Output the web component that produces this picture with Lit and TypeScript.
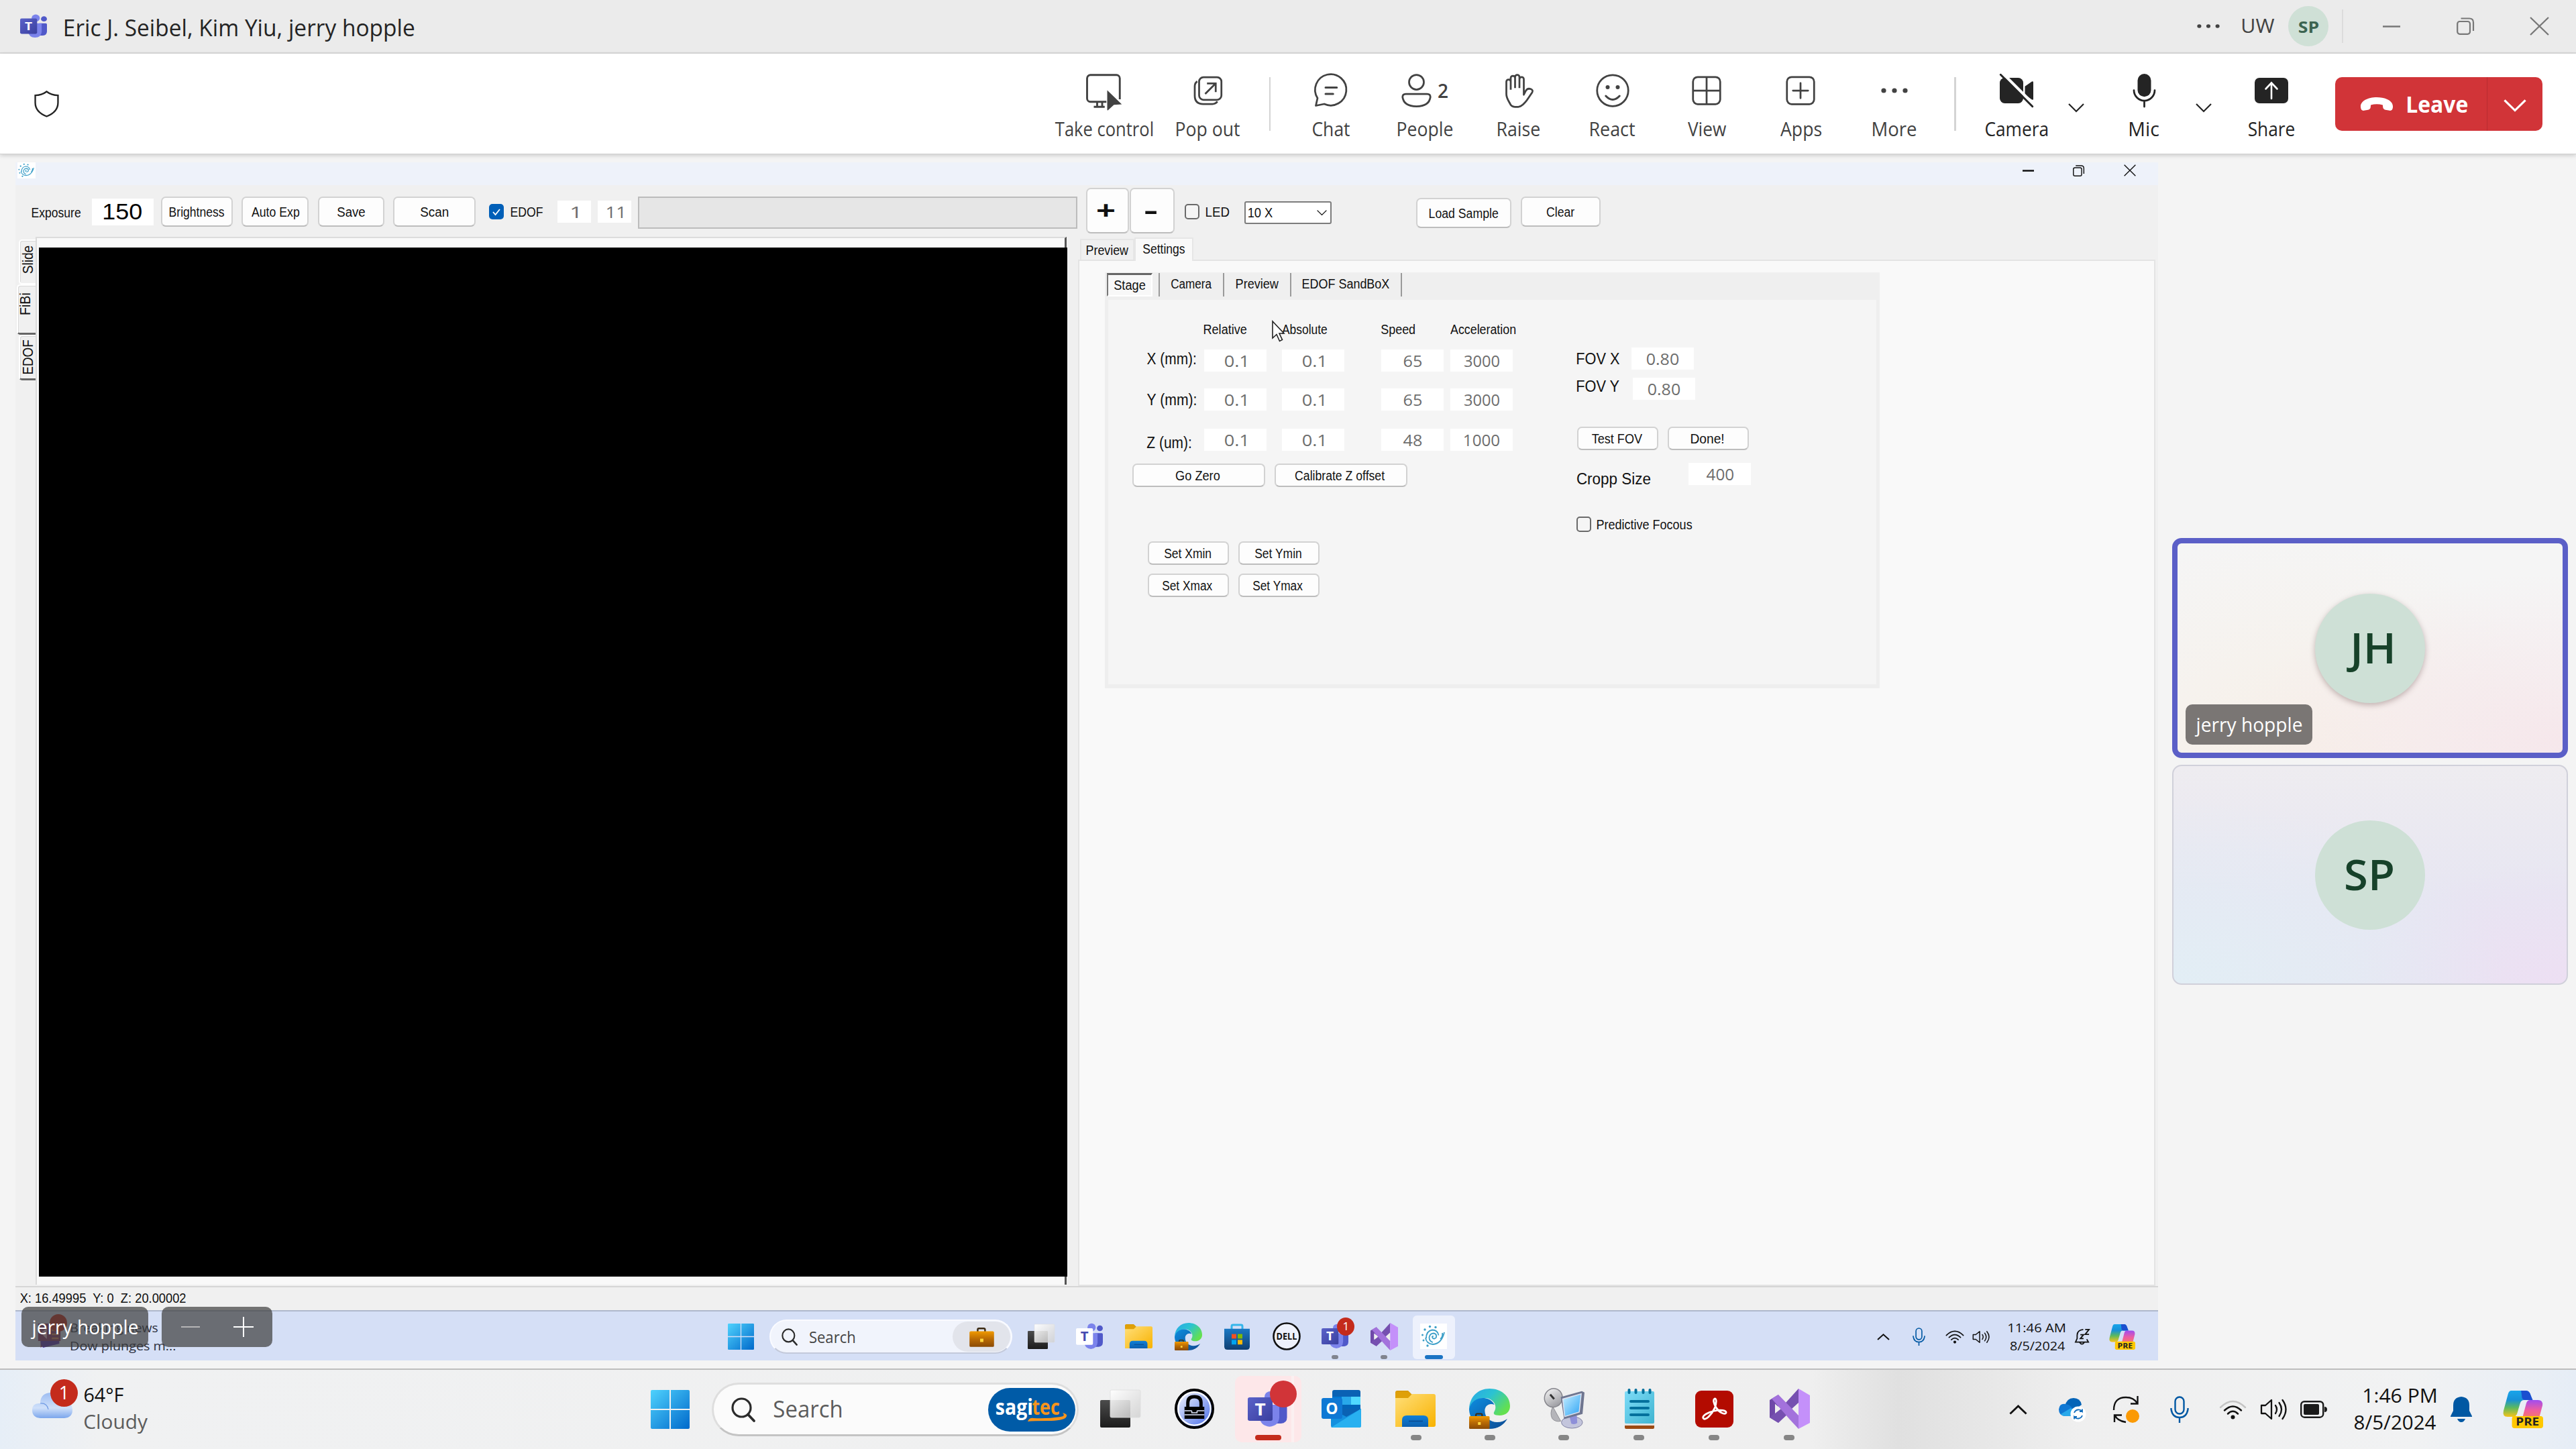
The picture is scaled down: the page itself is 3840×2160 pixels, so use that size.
import { LitElement, html, svg, css } from "lit";
import { customElement, property } from "lit/decorators.js";

/** One line of text whose ink is scaled horizontally to a given width. */
@customElement("fit-text")
class FitText extends LitElement {
  @property({ type: Number }) w = 0;
  static styles = css`
    :host { display: inline-block; white-space: pre; flex: none; text-align: left; }
    .line { display: inline-block; transform-origin: 0 50%; }
  `;
  render() {
    return html`<span class="line"><slot></slot></span>`;
  }
  updated() {
    const line = this.renderRoot.querySelector(".line") as HTMLElement;
    const cs = getComputedStyle(this);
    const ctx = document.createElement("canvas").getContext("2d")!;
    const size = parseFloat(cs.fontSize);
    ctx.font = `${cs.fontWeight} 200px ${cs.fontFamily}`;
    const m = ctx.measureText(this.textContent || "");
    const unit = size / 200;
    const left = m.actualBoundingBoxLeft * unit;
    const k = this.w / (m.actualBoundingBoxRight * unit + left);
    this.style.width = `${this.w}px`;
    line.style.transform = `translateX(${left * k}px) scaleX(${k})`;
  }
}

const t = (text: string, w: number, cls = "") => html`<fit-text class=${cls} w=${w}>${text}</fit-text>`;

const defs = svg`
  <linearGradient id="win" x1="0" y1="0" x2="1" y2="1"><stop offset="0" stop-color="#4fd2fd"/><stop offset="1" stop-color="#0069cb"/></linearGradient>
  <linearGradient id="fold" x1="0" y1="0" x2="1" y2="1"><stop offset="0" stop-color="#ffdf7a"/><stop offset="1" stop-color="#f8b200"/></linearGradient>
  <linearGradient id="foldb" x1="0" y1="0" x2="0" y2="1"><stop offset="0" stop-color="#0f80d8"/><stop offset="1" stop-color="#0c5fae"/></linearGradient>
  <linearGradient id="edg" x1="0" y1="0" x2="1" y2=".6"><stop offset="0" stop-color="#2aa6e8"/><stop offset=".5" stop-color="#2bc3d2"/><stop offset="1" stop-color="#63e04f"/></linearGradient>
  <linearGradient id="edb" x1="0" y1="0" x2="1" y2="1"><stop offset="0" stop-color="#0d8de0"/><stop offset="1" stop-color="#0d4a92"/></linearGradient>
  <linearGradient id="bag" x1="0" y1="0" x2="0" y2="1"><stop offset="0" stop-color="#f09a00"/><stop offset=".5" stop-color="#b96a04"/><stop offset="1" stop-color="#8a4a04"/></linearGradient>
  <linearGradient id="tvd" x1="0" y1="0" x2="0" y2="1"><stop offset="0" stop-color="#4c4c4c"/><stop offset="1" stop-color="#1c1c1c"/></linearGradient>
  <linearGradient id="tvl" x1="0" y1="0" x2="1" y2="1"><stop offset="0" stop-color="#fff" stop-opacity=".95"/><stop offset="1" stop-color="#d0d0d0" stop-opacity=".8"/></linearGradient>
  <linearGradient id="kp" x1="0" y1="0" x2="1" y2="1"><stop offset="0" stop-color="#fff"/><stop offset="1" stop-color="#3f66e8"/></linearGradient>
  <linearGradient id="note" x1="0" y1="0" x2="1" y2="1"><stop offset="0" stop-color="#7fdcf8"/><stop offset="1" stop-color="#3fb4d0"/></linearGradient>
  <linearGradient id="scr" x1="0" y1="0" x2="1" y2="1"><stop offset="0" stop-color="#c9efff"/><stop offset="1" stop-color="#2aa3f5"/></linearGradient>
  <linearGradient id="dish" x1="0" y1="0" x2="1" y2="1"><stop offset="0" stop-color="#fafafa"/><stop offset="1" stop-color="#8c8c92"/></linearGradient>
  <linearGradient id="cld" x1="0" y1="0" x2="0" y2="1"><stop offset="0" stop-color="#9dbdf2"/><stop offset=".6" stop-color="#cfe0fa"/><stop offset="1" stop-color="#7ba6ec"/></linearGradient>
  <linearGradient id="tt" x1="0" y1="0" x2="1" y2="1"><stop offset="0" stop-color="#5a62c9"/><stop offset="1" stop-color="#3a3f9f"/></linearGradient>
  <linearGradient id="c1" x1="0" y1="0" x2="0" y2="1"><stop offset="0" stop-color="#19a5ea"/><stop offset=".35" stop-color="#1791d8"/><stop offset=".65" stop-color="#5cb95e"/><stop offset="1" stop-color="#f7c31a"/></linearGradient>
  <linearGradient id="c2" x1="0" y1="0" x2="0" y2="1"><stop offset="0" stop-color="#a04df0"/><stop offset=".5" stop-color="#ee5da0"/><stop offset="1" stop-color="#f6815a"/></linearGradient>
  <linearGradient id="store" x1="0" y1="0" x2="0" y2="1"><stop offset="0" stop-color="#1a78c4"/><stop offset="1" stop-color="#103f72"/></linearGradient>
`;

const bagShape = svg`<path d="M10 42v-3q0-1.500 1.500-1.500h6q1.500 0 1.500 1.500v3" fill="none" stroke="#3b2a12" stroke-width="2"/><rect x="0" y="41" width="30" height="19" rx="1.500" fill="url(#bag)"/><rect x="13" y="50" width="4" height="4" fill="#ffd43b"/>`;
const people = svg`<circle cx="34" cy="10" r="9" fill="#7b83eb"/><circle cx="52" cy="12" r="6.500" fill="#5059c9"/><path d="M42 23h14q2.500 0 2.500 2.500v18q0 9-9 10h-8z" fill="#5059c9"/><path d="M18 23h29v21q-1 13.500-14.500 14.500Q19 57.500 18 44z" fill="#7b83eb"/>`;

const icons: Record<string, [string, unknown]> = {
  teams: ["0 0 60 60", svg`${people}<rect x="0" y="11" width="37" height="38" rx="3" fill="url(#tt)"/><text x="18.500" y="40" text-anchor="middle" font-size="28" font-weight="700" fill="#fff">T</text>`],
  teamsWhite: ["0 0 60 60", svg`${people}<rect x="0" y="12" width="37" height="37" rx="3" fill="#fff"/><text x="18.500" y="41" text-anchor="middle" font-size="30" font-weight="700" fill="#454bb0">T</text>`],
  shield: ["0 0 36 40", svg`<path d="M18 1.500Q25 7 34.500 7.200V18Q34.500 32 18 38.500Q1.500 32 1.500 18V7.200Q11 7 18 1.500z" fill="none" stroke="#242424" stroke-width="2.300"/>`],
  control: ["0 0 22 22", svg`<g fill="none" stroke="#424242" stroke-width="1.150"><path d="M12.500 17.500H3a2 2 0 0 1-2-2V3.500a2 2 0 0 1 2-2h15.500a2 2 0 0 1 2 2V16M5 20.500h6.500M7 17.600v2.800M10 17.600v2.800"/></g><path d="M13 10.600L21.700 19l-4.700.300L13.500 22.500q-.500.300-.500-.400z" fill="#424242"/>`],
  pop: ["0 0 20 20", svg`<g fill="none" stroke="#424242" stroke-width="1.100"><rect x="4.600" y="2" width="13.300" height="13.500" rx="2.600"/><path d="M3.500 4.500Q2 5.500 2 7.500v5.500q0 5 5 5h5.500q2 0 3-1.500M8.200 12l6-6M9.300 5.700h5.200v5.200"/></g>`],
  chat: ["0 0 20 20", svg`<path d="M1 19l1-4.500A9.300 9.300 0 1 1 6 18z" fill="none" stroke="#424242" stroke-width="1.100" stroke-linejoin="round"/><path d="M6.800 8.200h6.700M6.800 12h4.500" stroke="#424242" stroke-width="1.200" stroke-linecap="round"/>`],
  people: ["0 0 18 20", svg`<g fill="none" stroke="#424242" stroke-width="1.100"><circle cx="9" cy="5" r="4.400"/><path d="M2.600 12h12.800q1.900 0 1.900 1.900Q16.500 19.400 9 19.400T.7 13.900Q.7 12 2.600 12z"/></g>`],
  raise: ["0 0 20 20", svg`<path d="M2.600 12V4.700a1.300 1.300 0 0 1 2.600 0V9.500M5.200 9V2.500a1.300 1.300 0 0 1 2.600 0V8.500M7.800 8.500V1.900a1.300 1.300 0 0 1 2.600 0V8.500M10.400 8.500V3.200a1.300 1.300 0 0 1 2.600 0V12.500l1-2c.700-1.500 1.800-1.900 3.200-1.400 1 .400 1.300 1.200.800 2l-3.200 4.700c-.700 1-1.500 1.700-2.400 2.600-.800.700-1.500 1.300-2.700 1.300H7.700c-1.500 0-2.500-.700-3-2.100C3.800 15.900 2.600 14.500 2.600 12" fill="none" stroke="#424242" stroke-width="1.100" stroke-linejoin="round"/>`],
  react: ["0 0 20 20", svg`<circle cx="10" cy="10" r="9.300" fill="none" stroke="#424242" stroke-width="1.100"/><circle cx="7" cy="8" r="1.200" fill="#424242"/><circle cx="13" cy="8" r="1.200" fill="#424242"/><path d="M5.900 13.200q4.100 4.400 8.200 0" fill="none" stroke="#424242" stroke-width="1.200" stroke-linecap="round"/>`],
  view: ["0 0 20 20", svg`<g fill="none" stroke="#424242" stroke-width="1.100"><rect x="1.900" y="1.900" width="16.200" height="16.200" rx="2.800"/><path d="M10 2v16M2 10h16"/></g>`],
  apps: ["0 0 20 20", svg`<g fill="none" stroke="#424242" stroke-width="1.100"><rect x="1.900" y="1.900" width="16.200" height="16.200" rx="2.800"/><path d="M10 5.500v9M5.500 10h9" stroke-linecap="round"/></g>`],
  dots: ["0 0 40 8", svg`<g fill="#424242"><circle cx="4" cy="4" r="3.600"/><circle cx="20" cy="4" r="3.600"/><circle cx="36" cy="4" r="3.600"/></g>`],
  camera: ["0 0 20 20", svg`<rect x="0" y="2.400" width="14" height="15.200" rx="3" fill="#242424"/><path d="M15 7.500l4.200-2.900q.800-.400.800.500v9.800q0 .900-.800.500L15 12.500z" fill="#242424"/><path d="M1.500-.5L21 19" stroke="#fff" stroke-width="1.800"/><path d="M.5.500l19 19" stroke="#242424" stroke-width="1.200" stroke-linecap="round"/>`],
  mic: ["0 0 14 20", svg`<rect x="3" y="0" width="8" height="13.700" rx="4" fill="#242424"/><path d="M.8 9.800a6.200 6.200 0 0 0 12.400 0M7 16v3.600" fill="none" stroke="#242424" stroke-width="1.100" stroke-linecap="round"/>`],
  share: ["0 0 50 38" , svg`<rect width="50" height="38" rx="7" fill="#242424"/><path d="M25 31V8M16.500 16.500L25 7.500l8.500 9" fill="none" stroke="#fff" stroke-width="2.600" stroke-linecap="round"/>`],
  chev: ["0 0 24 13", svg`<path d="M1 1l11 11L23 1" fill="none" stroke="currentColor" stroke-width="2.200"/>`],
  up: ["0 0 28 15", svg`<path d="M1.500 13.500L14 2l12.500 11.500" fill="none" stroke="#111" stroke-width="3"/>`],
  phone: ["0 0 48 20", svg`<path d="M24 0C38 0 49 6 48 15q-.600 5.500-5 4.800l-6-1q-3.500-.800-3.800-4l-.300-3.300q-8.900-2.600-17.800 0l-.300 3.300q-.300 3.200-3.800 4l-6 1Q.600 20.500 0 15C-1 6 10 0 24 0z" fill="#fff"/>`],
  min: ["0 0 26 3", svg`<path d="M0 1.500h26" stroke="currentColor" stroke-width="2.500"/>`],
  restore: ["0 0 26 26", svg`<g fill="none" stroke="currentColor" stroke-width="2.200"><rect x="1.200" y="6" width="18.800" height="18.800" rx="3.500"/><path d="M6.500 1.500H19q6 0 6 6V20"/></g>`],
  close: ["0 0 28 28", svg`<path d="M1 1l26 26M27 1L1 27" stroke="currentColor" stroke-width="2.200"/>`],
  snail: ["0 0 40 38", svg`<rect width="40" height="38" fill="#fff"/><g fill="none" stroke="#3d9fc8" stroke-width="1.800"><path d="M20 19q-3-1-1.500 2.500 3 2.500 5.500-1 1-5-3.500-6-6 0-7 6 0 6 5.500 7.500M8 21q1 9 11 10 13-1 17-18M33 14q1 6-3 9"/><path d="M9 22q0-11 9-12.500 8 0 9.500 8"/></g><g fill="#3d9fc8"><circle cx="3.500" cy="17" r="1.500"/><circle cx="7" cy="9" r="1.700"/><circle cx="14.500" cy="4.500" r="1.700"/><circle cx="23" cy="5.500" r="1.700"/><circle cx="5" cy="25" r="1.500"/><circle cx="11" cy="33" r="1.700"/></g>`],
  start: ["0 0 58 58", svg`<path d="M2 0h26v28H0V2q0-2 2-2zM30 0h26q2 0 2 2v26H30zM0 30h28v28H2q-2 0-2-2zM30 30h28v26q0 2-2 2H30z" fill="url(#win)"/>`],
  search: ["0 0 36 37", svg`<circle cx="15.500" cy="15.500" r="13.500" fill="none" stroke="#2b2b2b" stroke-width="3.200"/><path d="M25 25.500l9 9.500" stroke="#2b2b2b" stroke-width="3.800" stroke-linecap="round"/>`],
  task: ["0 0 60 56", svg`<rect x="0" y="15" width="45" height="41" rx="2" fill="url(#tvd)"/><rect x="15" y="0" width="45" height="41" rx="2" fill="url(#tvl)" stroke="#ddd" stroke-width=".8"/>`],
  keepass: ["0 0 60 60", svg`<circle cx="30" cy="30" r="28" fill="url(#kp)" stroke="#000" stroke-width="4"/><circle cx="30" cy="30" r="24.500" fill="none" stroke="#fff" stroke-width="2"/><path d="M20 27v-6q0-9 10-9t10 9v6" fill="none" stroke="#000" stroke-width="5"/><path d="M15 27h30v18H15z"/><path d="M15 33h11M34 33h11M15 39h30M26 33v3h8v-3" stroke="#dfe6fb" stroke-width="1.500" fill="none"/>`],
  outlook: ["0 0 60 56", svg`<rect x="16" y="0" width="42" height="40" rx="3" fill="#0a62b4"/><rect x="30" y="10" width="14" height="12" fill="#28a8ea"/><rect x="44" y="10" width="14" height="12" fill="#50d9ff"/><rect x="16" y="10" width="14" height="12" fill="#0078d4"/><path d="M14 28l23 12 22-12v25q0 3-3 3H17q-3 0-3-3z" fill="#1490df"/><path d="M14 56l45-28v25q0 3-3 3z" fill="#28b0f0"/><path d="M32 28h26v-6H32z" fill="#0364b8"/><rect x="0" y="12" width="31" height="31" rx="3" fill="#0f78d4"/><text x="15.500" y="36" text-anchor="middle" font-size="23" font-weight="700" fill="#fff">O</text>`],
  folder: ["0 0 60 54", svg`<path d="M0 3q0-3 3-3h16l6 6H0z" fill="#d99a06"/><path d="M0 9h20l5-4h32q3 0 3 3v43q0 3-3 3H0z" fill="url(#fold)"/><path d="M0 2h20l4 4-5 5H0z" fill="#dfa008"/><path d="M10 54V44q0-7 7-7h25q7 0 7 7v10z" fill="url(#foldb)"/><path d="M20 45.500h21" stroke="#0a4f96" stroke-width="1.800"/>`],
  edge: ["0 0 60 60", svg`<path d="M30 0c17 0 30 11 30 26 0 9-7 14-15 14-9 0-10-3-8-6C42 26 36 15 24 14 12 13 4 20 0 30 1 12 13 0 30 0z" fill="url(#edg)"/><path d="M0 30C3 18 13 13 22 14c8 1 13 5 15 10-8-3-14 2-14 9 0 10 8 17 18 17 6 0 11-2 15-5-5 9-14 15-26 15C13 60 0 46 0 30z" fill="url(#edb)"/>${bagShape}`],
  rdp: ["0 0 62 62", svg`<path d="M14 28l12 22q-8 2-13-4-4-8 1-18z" fill="#b5b5ba" stroke="#8c8c92"/><ellipse cx="15" cy="14.500" rx="13.500" ry="14.500" transform="rotate(15 16 14)" fill="url(#dish)" stroke="#85858c" stroke-width="1.500"/><path d="M10 9l6 7" stroke="#333" stroke-width="3"/><ellipse cx="43" cy="52" rx="16" ry="9" fill="#c3c5dc" stroke="#7e80a0"/><path d="M38 38l12-3 1 18q-4 3-9 1z" fill="#8e8fd8"/><path d="M26 13l32-9 4 2-3 33-28 8z" fill="#6f7690"/><path d="M29 16l28-8-3 28-22 7z" fill="url(#scr)" stroke="#dfe3f0" stroke-width="1.500"/>`],
  notepad: ["0 0 44 60", svg`<path d="M0 54h44v4q0 2-2 2H2q-2 0-2-2z" fill="#9c4a12"/><path d="M0 50h44v5H0z" fill="#e8e4e0"/><rect y="4" width="44" height="48" rx="2" fill="url(#note)"/><g stroke="#04709c" stroke-width="4" stroke-linecap="round"><path d="M6.500 2v4M16.500 2v4M27.500 2v4M37.500 2v4"/><path d="M9 19h26M9 29h26M9 39h26"/></g>`],
  acrobat: ["0 0 57 55", svg`<rect width="57" height="55" rx="9" fill="#b30b00"/><path d="M12 41c-2-4 8-9 17-11 8-1.500 18-1 17 3-1.500 4-11-1-15-8-3-5-5-12-2-13s3 7 0 14C25 35 15 46 12 41z" fill="none" stroke="#fff" stroke-width="2.800"/>`],
  vs: ["0 0 60 60", svg`<path d="M0 17l13-8v42L0 43zM8 23v14l7-7z" fill="#6f48a8" fill-rule="evenodd"/><path d="M43 0v23L13 51 0 43 24 21z" fill="#7650b0"/><path d="M8 23v14l9-7z" fill="#efefef"/><path d="M43 21v19L33 30z" fill="#efefef"/><path d="M3 15l10-6 30 31v20L30 46z" fill="#a372dc"/><path d="M43 0l17 10v41L43 60z" fill="#c490fa"/>`],
  bagIcon: ["-1 34 32 27", bagShape],
  store: ["0 0 40 40", svg`<path d="M12 9V4q0-2 2-2h12q2 0 2 2v5" fill="none" stroke="#35b5ea" stroke-width="3"/><path d="M1 8h38v27q0 5-5 5H6q-5 0-5-5z" fill="url(#store)"/><path d="M12 16h7v7h-7z" fill="#f25022"/><path d="M21 16h7v7h-7z" fill="#7fba00"/><path d="M12 25h7v7h-7z" fill="#00a4ef"/><path d="M21 25h7v7h-7z" fill="#ffb900"/>`],
  dell: ["0 0 42 42", svg`<circle cx="21" cy="21" r="19.500" fill="#eef1fb" stroke="#111" stroke-width="2.600"/><text x="21" y="26" text-anchor="middle" font-size="13.500" font-weight="700" textLength="31" lengthAdjust="spacingAndGlyphs" fill="#111">DELL</text>`],
  onedrive: ["0 0 39 35", svg`<path d="M9 12Q12 0 22 0t12 10L20 20z" fill="#0364b8"/><path d="M0 17Q1 7 11 9q9 2 12 12l-9 6H9Q0 26 0 17z" fill="#0f78d4"/><path d="M3 24l15-9 12 8-6 4H8q-3 0-5-3z" fill="#28a8ea"/><circle cx="29" cy="24" r="11.500" fill="#fff"/><path d="M23 22a7 7 0 0 1 12-2v-3.500M35 20h-4M35 26a7 7 0 0 1-12 2v3.500M23 28h4" fill="none" stroke="#0f6cbd" stroke-width="1.800"/>`],
  sync: ["0 0 40 40", svg`<path d="M2 21Q2 2 20 2q12 0 17 9M37.500 0v11.500H27M3 39V28.500h11M3.500 28.500Q7 37 20 39" fill="none" stroke="#111" stroke-width="2.400"/><circle cx="30" cy="30" r="10" fill="#fb9a05"/>`],
  micOut: ["0 0 28 40", svg`<g fill="none" stroke="currentColor" stroke-width="2.400"><rect x="7.500" y="1.500" width="13" height="25" rx="6.500"/><path d="M1.500 18v2q2 12 12.500 12T26.500 20v-2M14 32v8"/></g>`],
  wifi: ["0 0 41 29", svg`<g fill="none" stroke-width="2.500" stroke-linecap="round"><path d="M2 11Q20.500-7 39 11" stroke="var(--weak,#c4c4c4)"/><path d="M8 15.500q12.500-12 25 0M13 20.500q7.500-7.500 15 0" stroke="#111"/></g><circle cx="20.500" cy="25.500" r="3" fill="#111"/>`],
  speaker: ["0 0 40 34", svg`<g fill="none" stroke="#111" stroke-width="2.300" stroke-linecap="round" stroke-linejoin="round"><path d="M2 11h6l9-8v28l-9-8H2z"/><path d="M23 11q4 6 0 12M28.500 7q7 10 0 20M33.500 3q10 14 0 28"/></g>`],
  battery: ["0 0 40 26", svg`<rect x="1.200" y="1.200" width="33" height="23.500" rx="5" fill="none" stroke="#1a1a1a" stroke-width="2.400"/><rect x="5" y="5" width="23" height="16" rx="2" fill="#1a1a1a"/><path d="M36 9q4 0 4 4t-4 4z" fill="#1a1a1a"/>`],
  bell: ["0 0 32 38", svg`<path d="M16 0q12 1 12 13v8l4 8v1H0v-1l4-8v-8Q4 1 16 0zM10 33h12q-2 5-6 5t-6-5z" fill="#0058a3"/>`],
  bellZ: ["0 0 24 26", svg`<path d="M13 2Q3.500 3 3.500 11v5L1 21.500h20L18.500 17M7.500 22q3.500 5 7 0" fill="none" stroke="#111" stroke-width="1.900"/><path d="M8.500 10h5l-5 6h5M16 2h6l-6 7.500h6" fill="none" stroke="#111" stroke-width="1.900"/>`],
  copilot: ["0 0 62 56", svg`<path d="M13 0h22q6 0 8 8l2 6H33q-5 0-6.500 5L22 34q-1.500 5-7 5H7q-8 0-6-9L8 5q1.500-5 5-5z" fill="url(#c1)"/><path d="M28 0h8q5 0 7 7l3 7H34q-5 0-5-7z" fill="#1a4fd0"/><path d="M42 14h12q8 0 7 8l-6 22H24q5-1 6.500-5L36 19q1.500-5 6-5z" fill="url(#c2)"/><rect x="14" y="38" width="48" height="18" rx="4" fill="#ffc800"/><text x="38" y="52.500" text-anchor="middle" font-size="16" font-weight="700" textLength="36" lengthAdjust="spacingAndGlyphs" fill="#222">PRE</text>`],
  cloud: ["0 0 60 38", svg`<path d="M12 16Q12 0 29 0t19 14q12 1 12 12t-12 12H12Q0 37 0 26t12-10z" fill="url(#cld)"/><path d="M12 16q10-1 12 9" fill="none" stroke="#6f9ae4" stroke-width="1.200"/>`],
  swoosh: ["0 0 58 14", svg`<path d="M0 13Q2 7 9 8q20 1 40-2Q57 5 52 0q9 2 5 7Q52 12 30 12T0 13z" fill="#f7941d"/>`],
  check: ["0 0 22 23", svg`<path d="M6 12l3.500 4 6.500-8" fill="none" stroke="#fff" stroke-width="1.800"/>`],
  cursor: ["0 0 19 32", svg`<path d="M1 1v25l6-5.500 4.500 10 4-2-4.500-9.500H18z" fill="#fff" stroke="#222" stroke-width="1.600"/>`],
  news: ["0 0 40 42", svg`<path d="M2 6h36v26H20L6 42V32H2z" fill="#8d3b68"/><path d="M6 32h30v4l-26 6q-4-4-4-10z" fill="#5a35b5"/><path d="M6 20l10-7v16z" fill="#e6b9cc"/><path d="M24 16h11M24 22h11M24 28h11" stroke="#d98b5c" stroke-width="2.500"/>`],
};

const ic = (name: string, w: number, h: number) => {
  const [box, body] = icons[name];
  return html`<svg class="ic" width=${w} height=${h} viewBox=${box} preserveAspectRatio="none">${body}</svg>`;
};

@customElement("app-root")
class AppRoot extends LitElement {
  static styles = css`
    :host { display: block; }
    * { box-sizing: border-box; }
    .ic { display: block; flex: none; overflow: visible; }
    .defs { position: absolute; width: 0; height: 0; }
    .root { position: relative; width: 3840px; height: 2160px; overflow: hidden; display: flex; flex-direction: column; background: #f4f4f4; font-family: "Open Sans", "Noto Sans", sans-serif; color: #242424; }
    .tracks { display: grid; align-items: center; }
    .tracks > :nth-child(1) { grid-column: 2; } .tracks > :nth-child(2) { grid-column: 4; }
    .tracks > :nth-child(3) { grid-column: 6; } .tracks > :nth-child(4) { grid-column: 8; }
    .tracks > :nth-child(5) { grid-column: 10; } .tracks > :nth-child(6) { grid-column: 12; }
    .tracks > :nth-child(7) { grid-column: 14; } .tracks > :nth-child(8) { grid-column: 16; }
    .tracks > :nth-child(9) { grid-column: 18; } .tracks > :nth-child(10) { grid-column: 20; }
    .tracks > :nth-child(11) { grid-column: 22; } .tracks > :nth-child(12) { grid-column: 24; }
    .tracks > :nth-child(13) { grid-column: 26; } .tracks > :nth-child(14) { grid-column: 28; }
    .tracks > :nth-child(15) { grid-column: 30; } .tracks > :nth-child(16) { grid-column: 32; }
    .tracks > :nth-child(17) { grid-column: 34; } .tracks > :nth-child(18) { grid-column: 36; }
    .tracks > * { grid-row: 1; }

    .titlebar { height: 80px; background: #ebebeb; border-bottom: 2px solid #d8d8d8; color: #777; grid-template-columns: 30px 41px 26px 520px 2658px 34px 34px 47px 21px 60px 20px 2px 59px 26px 84px 26px 83px 29px; }
    .caption { font-size: 34px; line-height: 46px; color: #242424; padding-top: 3px; }
    .uw { font-size: 29px; color: #424242; margin-top: -3px; }
    .me { width: 60px; height: 60px; border-radius: 50%; background: #cfe0d6; color: #3c6450; font-weight: 700; font-size: 24px; display: grid; place-items: center; }
    .tdiv { width: 2px; height: 50px; background: #dcdcdc; }

    .toolbar { position: relative; height: 150px; background: #fff; border-bottom: 1px solid #d0d0d0; box-shadow: 0 2px 6px rgba(0,0,0,.16); display: flex; align-items: stretch; color: #424242; flex: none; }
    .shield { width: 1565px; padding: 55px 0 0 51px; }
    .tb { width: 140px; flex: none; display: flex; flex-direction: column; align-items: center; font-size: 28.500px; line-height: 34px; }
    .tb .pic { height: 50px; margin-top: 30px; display: flex; align-items: center; justify-content: center; }
    .tb fit-text { margin-top: 15px; }
    .tb.w160 { width: 160px; } .tb.w120 { width: 120px; color: #242424; }
    .ml5 { margin-left: 6px; } .ml12 { margin-left: 12px; } .ml20 { margin-left: 20px; } .ml30 { margin-left: 30px; }
    .vdiv { width: 2px; height: 80px; margin: 35px 0 0 21px; background: #d4d4d4; flex: none; }
    .vdiv.b { width: 3px; margin-left: 19px; }
    .tb b { font-size: 28px; font-weight: 600; margin-left: 9px; }
    .chev { width: 58px; height: 150px; display: flex; justify-content: center; padding-top: 74px; color: #242424; flex: none; }
    .leave { margin: 35px 0 0 35px; width: 309px; height: 80px; border-radius: 10px; background: #d13438; display: flex; color: #fff; font-weight: 700; font-size: 34px; }
    .leave .go { width: 227px; padding-left: 38px; display: flex; align-items: center; gap: 22px; border-right: 1px solid #b92b30; }
    .leave .more { flex: 1; display: grid; place-items: center; padding-top: 4px; }

    .main { height: 1810px; display: flex; flex: none; }
    .share { position: relative; margin: 12px 0 0 23px; width: 3194px; height: 1786px; display: flex; flex-direction: column; background: #f0f0f0; color: #111; font-family: "Liberation Sans", Arial, sans-serif; font-size: 20px; line-height: 24px; flex: none; }
    .s-title { height: 34px; background: #eef2fa; grid-template-columns: 3px 27px 2962px 17px 58px 17px 59px 18px; padding-bottom: 10px; flex: none; }
    .s-tools { height: 76px; flex: none; padding-top: 3px; grid-template-columns: 25px 72px 17px 92px 11px 107px 13px 100px 14px 99px 13px 123px 20px 22px 11px 47px 22px 50px 10px 50px 10px 655px 13px 64px 1px 67px 15px 22px 10px 34px 23px 130px 126px 142px 14px 119px; }
    .btn { display: flex; align-items: center; justify-content: center; background: #fdfdfd; border: 2px solid #d2d2d2; border-bottom-color: #bdbdbd; border-radius: 7px; height: 45px; }
    .btn.tall { height: 68px; margin-top: -3px; font-weight: 700; font-size: 36px; padding: 0 5px 0 0; }
    .btn.low { margin-top: 4px; }
    .field { display: flex; align-items: center; justify-content: center; height: 33px; background: #fff; color: #6d6d6d; font-family: "Open Sans", sans-serif; font-size: 24px; }
    .field.dark { height: 40px; color: #000; font-family: "Liberation Sans", sans-serif; font-size: 33px; }
    .lbl { padding-top: 2px; }
    .box { width: 22px; height: 23px; border: 2px solid #6a6a6a; border-radius: 5px; background: #f5f5f5; }
    .box.on { background: #005fb8; border: 0; }
    .bar { height: 48px; background: #e6e6e6; border: 2px solid #bcbcbc; margin-top: 2px; }
    .select { height: 34px; background: #fff; border: 2px solid #7c7c7c; border-radius: 3px; display: flex; align-items: center; justify-content: space-between; padding: 0 5px 0 4px; color: #111; margin-top: 2px; }
    .s-body { height: 1565px; display: flex; flex: none; }
    .vtabs { width: 30px; padding-top: 5px; flex: none; display: flex; flex-direction: column; align-items: flex-end; }
    .vtab { width: 25px; border: 2px solid #fff; border-right: 0; border-radius: 5px 0 0 5px; box-shadow: inset 1px 1px 0 #d9d9d9; display: flex; align-items: center; justify-content: center; font-size: 22px; line-height: 24px; }
    .vtab.a { height: 67px; } .vtab.b { width: 28px; height: 75px; border-bottom: 3px solid #666; } .vtab.c { height: 68px; border-bottom: 3px solid #666; }
    .rot { transform: rotate(-90deg); flex: none; display: flex; }
    .vtab.a .rot { margin-bottom: 8px; } .vtab.b .rot { margin: 0 6px 16px 0; } .vtab.c .rot { margin-bottom: 2px; }
    .picbox { width: 1537px; margin-top: 1px; border-left: 2px solid #dadada; border-top: 2px solid #dcdcdc; border-right: 3px solid #555; background: #f9f9f9; padding: 14px 0 12px 3px; height: 1562px; flex: none; }
    .black { height: 1534px; background: #000; margin-right: -4px; }
    .right { margin-left: 17px; width: 1606px; display: flex; flex-direction: column; }
    .tabs { height: 35px; display: flex; align-items: flex-end; padding-left: 3px; flex: none; }
    .tab { height: 31px; width: 81px; border: 2px solid #e6e6e6; border-bottom: 0; display: flex; justify-content: center; align-items: center; }
    .tab.on { height: 35px; width: 88px; background: #f9f9f9; margin-bottom: -2px; padding-bottom: 3px; position: relative; }
    .page { flex: 1; background: #f9f9f9; border: 2px solid #e4e4e4; padding: 17px 0 0 38px; }
    .panel { width: 1155px; height: 620px; background: #f5f5f5; border: solid #eeeeee; border-width: 0 5px 6px 5px; display: flex; flex-direction: column; }
    .strip { height: 41px; margin: 0 -5px; background: #efefef; display: flex; padding-left: 3px; flex: none; }
    .strip div { height: 35px; display: flex; align-items: center; justify-content: center; border-right: 2px solid #9a9a9a; margin-top: 1px; padding-bottom: 3px; }
    .strip .st { width: 68px; border: 2px solid #fff; border-top: 3px solid #666; border-left: 2px solid #777; background: #f8f8f8; padding: 0; }
    .s1 { width: 11px; } .s2 { width: 96px; } .s3 { width: 100px; } .s4 { width: 165px; }
    .pbody { position: relative; flex: 1; display: flex; }
    .ptr { position: absolute; left: 244px; top: 31px; }
    .colA { width: 688px; flex: none; }
    .grid5 { grid-template-columns: 58px 73px 12px 93px 23px 93px 55px 93px 10px 93px; height: 33px; }
    .grid5.head { height: 74px; padding-top: 14px; }
    .g2 { margin-top: 25px; } .g3 { margin-top: 27px; }
    .big { font-size: 23px; }
    .upn { margin-top: -5px; } .dn { margin-top: 9px; } .dn2 { margin-top: 15px; } .up2 { margin-top: -7px; }
    .brow { display: flex; height: 35px; }
    .brow .btn { height: 35px; padding-right: 3px; }
    .r1 { margin: 19px 0 0 36px; gap: 14px; } .r1 .btn { width: 198px; }
    .r2 { margin: 81px 0 0 59px; gap: 14px; } .r3 { margin: 13px 0 0 59px; gap: 14px; }
    .r2 .btn, .r3 .btn, .r4 .btn { width: 121px; }
    .colB { padding: 71px 0 0 11px; }
    .fr { display: flex; align-items: center; height: 33px; }
    .fr .field { width: 93px; }
    .f1 { gap: 18px; } .f2 { margin-top: 12px; gap: 20px; } .r4 { margin: 40px 0 0 0; gap: 14px; }
    .f3 { margin-top: 19px; gap: 57px; } .f4 { margin-top: 42px; gap: 9px; margin-left: -1px; }
    .status { height: 36px; border-top: 2px solid #d6d6d6; padding: 4px 0 0 7px; font-size: 21px; flex: none; }
    .s-task { height: 75px; background: #d5dff6; border-top: 2px solid #aeb8cc; flex: none; font-family: "Open Sans", sans-serif; grid-template-columns: 32px 210px 820px 39px 23px 362px 6px 659px 624px 19px 34px 19px 30px 28px 12px 26px 28px 84px 15px 23px 28px 39px; --weak: #111; padding-top: 2px; }
    .newsrow { display: flex; gap: 14px; position: relative; font-size: 18px; }
    .newsrow .col { display: flex; flex-direction: column; gap: 2px; line-height: 25px; color: #2d3140; }
    .nb { position: absolute; left: 19px; top: -8px; width: 26px; height: 26px; border-radius: 50%; background: #c42b1c; }
    .s-search { height: 51px; border-radius: 26px; background: #f1f4fc; border: 2px solid #fafbff; border-bottom-color: #c3c9da; display: flex; align-items: center; padding-left: 16px; font-size: 24px; line-height: 30px; color: #444; }
    .s-search fit-text { margin-left: 18px; }
    .s-bag { margin-left: 146px; width: 86px; height: 45px; border-radius: 23px; background: #e2e4eb; display: grid; place-items: center; flex: none; }
    .apps { display: flex; height: 71px; }
    .app { position: relative; width: 73.200px; display: grid; place-items: center; padding-bottom: 1px; }
    .app.on::before { content: ""; position: absolute; left: 5px; top: 4px; width: 63px; height: 65px; border-radius: 6px; background: #edf1fc; }
    .app .ic { position: relative; }
    .dot { position: absolute; bottom: 2px; left: 31px; width: 10px; height: 6px; border-radius: 3px; background: #80848f; }
    .app.on .dot { width: 27px; left: 23px; background: #1a73c4; }
    .nbadge { position: absolute; right: 8px; top: 7px; width: 26px; height: 27px; border-radius: 50%; background: #c42b1c; color: #fff; font-size: 17px; text-align: center; line-height: 26px; }
    .clock { font-size: 18px; line-height: 27px; display: flex; flex-direction: column; align-items: flex-end; }
    .name { position: absolute; left: 9px; top: 1706px; width: 189px; height: 60px; border-radius: 10px; background: rgba(60,60,60,.7); color: #fff; font: 29px/36px "Open Sans", sans-serif; display: flex; align-items: center; padding: 0 0 0 14px; }
    .zoomer { position: absolute; left: 218px; top: 1706px; width: 165px; height: 60px; border-radius: 10px; background: rgba(60,60,60,.7); display: flex; align-items: center; padding-left: 29px; gap: 50px; }
    .zoomer i { display: block; width: 28px; height: 2px; background: #b5b5b5; }
    .zoomer .pl { position: relative; width: 30px; background: #fff; }
    .zoomer .pl::after { content: ""; position: absolute; left: 14px; top: -14px; width: 2px; height: 30px; background: #fff; }

    .tiles { margin: 572px 0 0 21px; width: 590px; display: flex; flex-direction: column; gap: 10px; }
    .tile { position: relative; height: 328px; border-radius: 14px; display: grid; place-items: center; }
    .tile.a { border: 8px solid #5b5fc7; background: radial-gradient(ellipse at 100% 95%, #f6e7eb 0, rgba(246,231,235,0) 60%), radial-gradient(ellipse at 30% 115%, #f7efe6 0, rgba(247,239,230,0) 75%), #f5f5f5; }
    .tile.b { border: 2px solid #d0d0da; background: radial-gradient(ellipse at 0 100%, #e2eef5 0, rgba(226,238,245,0) 60%), radial-gradient(ellipse at 100% 100%, #eddff3 0, rgba(237,223,243,0) 40%), linear-gradient(#eeecf0, #e7e6f2 60%); }
    .av { width: 164px; height: 163px; border-radius: 50%; background: #cee0d6; color: #17422a; font-size: 64px; line-height: 80px; font-weight: 600; display: grid; place-items: center; padding: 0 2px 3px 0; }
    .tile.a .av { box-shadow: 0 3px 8px rgba(90,60,60,.35); }
    .tag { position: absolute; left: 12px; bottom: 12px; width: 189px; height: 60px; border-radius: 10px; background: #7a7674; color: #fff; font-size: 29px; line-height: 36px; display: flex; align-items: center; padding: 0 0 0 14px; }

    .taskbar { height: 120px; flex: none; border-top: 2px solid #bdbdbd; background: linear-gradient(90deg, #e6eef7 0, #f0f1f2 150px, #efefef 2700px, #e0e0e0 2830px, #efefef 3100px, #f1f2f3 3600px, #e6edf6 3840px); font-size: 28.500px; line-height: 40px; color: #111; grid-template-columns: 48px 182px 740px 58px 33px 547px 7px 1108px 272px 27px 47px 39px 41px 40px 46px 28px 45px 41px 20px 40px 20px 40px 41px 121px 22px 32px 46px 60px; }
    .weather { position: relative; display: flex; gap: 18px; align-items: center; }
    .weather .col { display: flex; flex-direction: column; margin-top: -4px; }
    .weather .c2 { color: #5c5c5c; }
    .wb { position: absolute; left: 27px; top: -7px; width: 41px; height: 41px; border-radius: 50%; background: #c42b1c; color: #fff; text-align: center; font-size: 27px; line-height: 40px; }
    .weather .ic { margin-top: -13px; }
    .search { height: 80px; border-radius: 40px; background: #fbfbfb; border: 3px solid #dedede; border-bottom-color: #c4c4c4; display: flex; align-items: center; padding-left: 26px; font-size: 35px; line-height: 44px; color: #5c5c5c; }
    .search > fit-text { margin: -2px 0 0 28px; }
    .sagi { margin-left: 219px; width: 130px; height: 65px; border-radius: 33px; background: #005ba7; flex: none; color: #fff; font-weight: 700; font-size: 33px; line-height: 36px; padding: 10px 0 0 12px; position: relative; }
    .sagi .w { display: flex; gap: 1px; } .sagi .o { color: #f7941d; }
    .sagi .ic { margin: -9px 0 0 47px; position: relative; }
    .bapps { display: flex; height: 118px; }
    .bapp { position: relative; width: 110px; display: grid; place-items: center; }
    .bapp.x { width: 112px; padding-left: 1px; }
    .bapp .ic { position: relative; margin-bottom: 2px; }
    .bapp.act::before { content: ""; position: absolute; left: 6px; top: 9px; width: 99px; height: 99px; border-radius: 10px; background: linear-gradient(90deg, #fde7e9 84px, #fbf0f1 84px, #fbf0f1 88px, #fde7e9 88px); }
    .bdot { position: absolute; bottom: 13px; left: 48px; width: 16px; height: 8px; border-radius: 4px; background: #868686; }
    .act .bdot { width: 39px; left: 36px; background: #c42b1c; }
    .red { position: absolute; left: 58px; top: 16px; width: 40px; height: 40px; border-radius: 50%; background: #d13438; }
    .time { display: flex; flex-direction: column; align-items: flex-end; margin-top: -3px; }
    .blue { color: #0058a3; }
  `;

  tb(icon: unknown, label: string, w: number, cls = "") {
    return html`<div class="tb ${cls}"><div class="pic">${icon}</div>${t(label, w)}</div>`;
  }

  axis(label: string, w: number, tweak: string, row: string, v: [string, number][]) {
    return html`<div class="tracks grid5 ${row}">${t(label, w, "big " + tweak)}${v.map(([s, n]) => html`<div class="field">${t(s, n)}</div>`)}</div>`;
  }

  renderPanel() {
    return html`<div class="panel">
      <div class="strip">
        <div class="st">${t("Stage", 46)}</div><div class="s1"></div><div class="s2">${t("Camera", 60)}</div><div class="s3">${t("Preview", 63)}</div><div class="s4">${t("EDOF SandBoX", 129)}</div>
      </div>
      <div class="pbody">
        <div class="colA">
          <div class="tracks grid5 head"><span></span>${t("Relative", 63)}${t("Absolute", 67)}${t("Speed", 50)}${t("Acceleration", 97)}</div>
          ${this.axis("X (mm):", 72, "upn", "", [["0.1", 31], ["0.1", 31], ["65", 26], ["3000", 52]])}
          ${this.axis("Y (mm):", 73, "", "g2", [["0.1", 31], ["0.1", 31], ["65", 26], ["3000", 52]])}
          ${this.axis("Z (um):", 65, "dn", "g3", [["0.1", 31], ["0.1", 31], ["48", 27], ["1000", 52]])}
          <div class="brow r1"><div class="btn">${t("Go Zero", 65)}</div><div class="btn">${t("Calibrate Z offset", 133)}</div></div>
          <div class="brow r2"><div class="btn">${t("Set Xmin", 69)}</div><div class="btn">${t("Set Ymin", 69)}</div></div>
          <div class="brow r3"><div class="btn">${t("Set Xmax", 74)}</div><div class="btn">${t("Set Ymax", 74)}</div></div>
        </div>
        <div class="colB">
          <div class="fr f1">${t("FOV X", 63, "big")}<div class="field">${t("0.80", 47)}</div></div>
          <div class="fr f2">${t("FOV Y", 63, "big up2")}<div class="field">${t("0.80", 47)}</div></div>
          <div class="brow r4"><div class="btn">${t("Test FOV", 75)}</div><div class="btn">${t("Done!", 48)}</div></div>
          <div class="fr f3">${t("Cropp Size", 109, "big dn2")}<div class="field">${t("400", 40)}</div></div>
          <div class="fr f4"><div class="box"></div>${t("Predictive Focous", 141)}</div>
        </div>
        <div class="ptr">${ic("cursor", 19, 32)}</div>
      </div>
    </div>`;
  }

  renderShare() {
    return html`<div class="share">
      <div class="tracks s-title">${ic("snail", 27, 24)}${ic("min", 17, 3)}${ic("restore", 17, 17)}${ic("close", 18, 18)}</div>
      <div class="tracks s-tools">
        ${t("Exposure", 72, "lbl")}
        <div class="field dark">${t("150", 56)}</div>
        <div class="btn">${t("Brightness", 81)}</div>
        <div class="btn">${t("Auto Exp", 71)}</div>
        <div class="btn">${t("Save", 41)}</div>
        <div class="btn">${t("Scan", 41)}</div>
        <div class="box on">${ic("check", 22, 23)}</div>
        ${t("EDOF", 47)}
        <div class="field">${t("1", 9)}</div>
        <div class="field">${t("11", 23)}</div>
        <div class="bar"></div>
        <div class="btn tall">${t("+", 25)}</div>
        <div class="btn tall">${t("-", 17)}</div>
        <div class="box"></div>
        ${t("LED", 34)}
        <div class="select">${t("10 X", 36)}${ic("chev", 15, 8)}</div>
        <div class="btn low">${t("Load Sample", 102)}</div>
        <div class="btn">${t("Clear", 41)}</div>
      </div>
      <div class="s-body">
        <div class="vtabs">
          <div class="vtab a"><div class="rot">${t("Slide", 41)}</div></div>
          <div class="vtab b"><div class="rot">${t("FiBi", 31)}</div></div>
          <div class="vtab c"><div class="rot">${t("EDOF", 50)}</div></div>
        </div>
        <div class="picbox"><div class="black"></div></div>
        <div class="right">
          <div class="tabs"><div class="tab">${t("Preview", 62)}</div><div class="tab on">${t("Settings", 62)}</div></div>
          <div class="page">${this.renderPanel()}</div>
        </div>
      </div>
      <div class="status">${t("X: 16.49995  Y: 0  Z: 20.00002", 247)}</div>
      <div class="tracks s-task">
        <div class="newsrow">${ic("news", 37, 42)}<div class="nb"></div><div class="col">${t("Breaking news", 129)}${t("Dow plunges m...", 155)}</div></div>
        ${ic("start", 39, 39)}
        <div class="s-search">${ic("search", 24, 26)}${t("Search", 67)}<div class="s-bag">${ic("bagIcon", 39, 33)}</div></div>
        <div class="apps">
          <div class="app">${ic("task", 40, 37)}</div>
          <div class="app">${ic("teamsWhite", 41, 40)}</div>
          <div class="app">${ic("folder", 41, 36)}</div>
          <div class="app">${ic("edge", 41, 41)}</div>
          <div class="app">${ic("store", 40, 39)}</div>
          <div class="app">${ic("dell", 42, 42)}</div>
          <div class="app">${ic("teams", 41, 38)}<span class="nbadge">1</span><span class="dot"></span></div>
          <div class="app">${ic("vs", 41, 41)}<span class="dot"></span></div>
          <div class="app on">${ic("snail", 40, 38)}<span class="dot"></span></div>
        </div>
        ${ic("up", 19, 10)}
        <span class="blue">${ic("micOut", 19, 27)}</span>
        ${ic("wifi", 28, 20)}
        ${ic("speaker", 26, 20)}
        <div class="clock">${t("11:46 AM", 84)}${t("8/5/2024", 81)}</div>
        ${ic("bellZ", 23, 25)}
        ${ic("copilot", 39, 38)}
      </div>
      <div class="name">${t("jerry hopple", 159)}</div>
      <div class="zoomer"><i></i><i class="pl"></i></div>
    </div>`;
  }

  render() {
    return html`<div class="root">
      <svg class="defs"><defs>${defs}</defs></svg>
      <div class="tracks titlebar">
        ${ic("teams", 41, 36)}
        ${t("Eric J. Seibel, Kim Yiu, jerry hopple", 520, "caption")}
        ${ic("dots", 34, 6)}
        ${t("UW", 47, "uw")}
        <div class="me">${t("SP", 29)}</div>
        <div class="tdiv"></div>
        ${ic("min", 26, 3)}
        ${ic("restore", 26, 26)}
        ${ic("close", 29, 28)}
      </div>
      <div class="toolbar">
        <div class="shield">${ic("shield", 37, 40)}</div>
        ${this.tb(ic("control", 55, 55), "Take control", 145, "w160")}
        ${this.tb(ic("pop", 50, 50), "Pop out", 94, "ml5")}
        <div class="vdiv"></div>
        ${this.tb(ic("chat", 50, 50), "Chat", 55, "ml20")}
        ${this.tb(html`${ic("people", 45, 50)}<b>2</b>`, "People", 81)}
        ${this.tb(ic("raise", 50, 50), "Raise", 62)}
        ${this.tb(ic("react", 50, 50), "React", 66)}
        ${this.tb(ic("view", 50, 50), "View", 57)}
        ${this.tb(ic("apps", 50, 50), "Apps", 61)}
        ${this.tb(ic("dots", 40, 8), "More", 64)}
        <div class="vdiv b"></div>
        ${this.tb(ic("camera", 50, 50), "Camera", 92, "w120 ml30")}
        <div class="chev">${ic("chev", 24, 13)}</div>
        ${this.tb(ic("mic", 35, 50), "Mic", 43, "w120 ml12")}
        <div class="chev">${ic("chev", 24, 13)}</div>
        ${this.tb(ic("share", 50, 38), "Share", 68, "w120 ml12")}
        <div class="leave"><div class="go">${ic("phone", 48, 20)}${t("Leave", 89)}</div><div class="more">${ic("chev", 34, 18)}</div></div>
      </div>
      <div class="main">
        ${this.renderShare()}
        <div class="tiles">
          <div class="tile a"><div class="av">${t("JH", 68)}</div><div class="tag">${t("jerry hopple", 159)}</div></div>
          <div class="tile b"><div class="av">${t("SP", 70)}</div></div>
        </div>
      </div>
      <div class="tracks taskbar">
        <div class="weather">${ic("cloud", 60, 38)}<span class="wb">1</span><div class="col">${t("64°F", 58)}${t("Cloudy", 94, "c2")}</div></div>
        ${ic("start", 58, 58)}
        <div class="search">${ic("search", 36, 37)}${t("Search", 100)}<div class="sagi"><div class="w">${t("sagi", 53)}${t("tec", 40, "o")}</div>${ic("swoosh", 58, 14)}</div></div>
        <div class="bapps">
          <div class="bapp">${ic("task", 60, 56)}</div>
          <div class="bapp">${ic("keepass", 59, 60)}</div>
          <div class="bapp act">${ic("teams", 60, 55)}<span class="red"></span><span class="bdot"></span></div>
          <div class="bapp">${ic("outlook", 60, 56)}</div>
          <div class="bapp">${ic("folder", 60, 54)}<span class="bdot"></span></div>
          <div class="bapp">${ic("edge", 61, 60)}<span class="bdot"></span></div>
          <div class="bapp x">${ic("rdp", 61, 60)}<span class="bdot"></span></div>
          <div class="bapp x">${ic("notepad", 44, 60)}<span class="bdot"></span></div>
          <div class="bapp x">${ic("acrobat", 57, 55)}<span class="bdot"></span></div>
          <div class="bapp x">${ic("vs", 60, 60)}<span class="bdot"></span></div>
        </div>
        ${ic("up", 27, 15)}
        ${ic("onedrive", 39, 35)}
        ${ic("sync", 40, 40)}
        <span class="blue">${ic("micOut", 28, 40)}</span>
        ${ic("wifi", 41, 29)}
        ${ic("speaker", 40, 34)}
        ${ic("battery", 40, 26)}
        <div class="time">${t("1:46 PM", 107)}${t("8/5/2024", 121)}</div>
        ${ic("bell", 32, 38)}
        ${ic("copilot", 60, 56)}
      </div>
    </div>`;
  }
}
